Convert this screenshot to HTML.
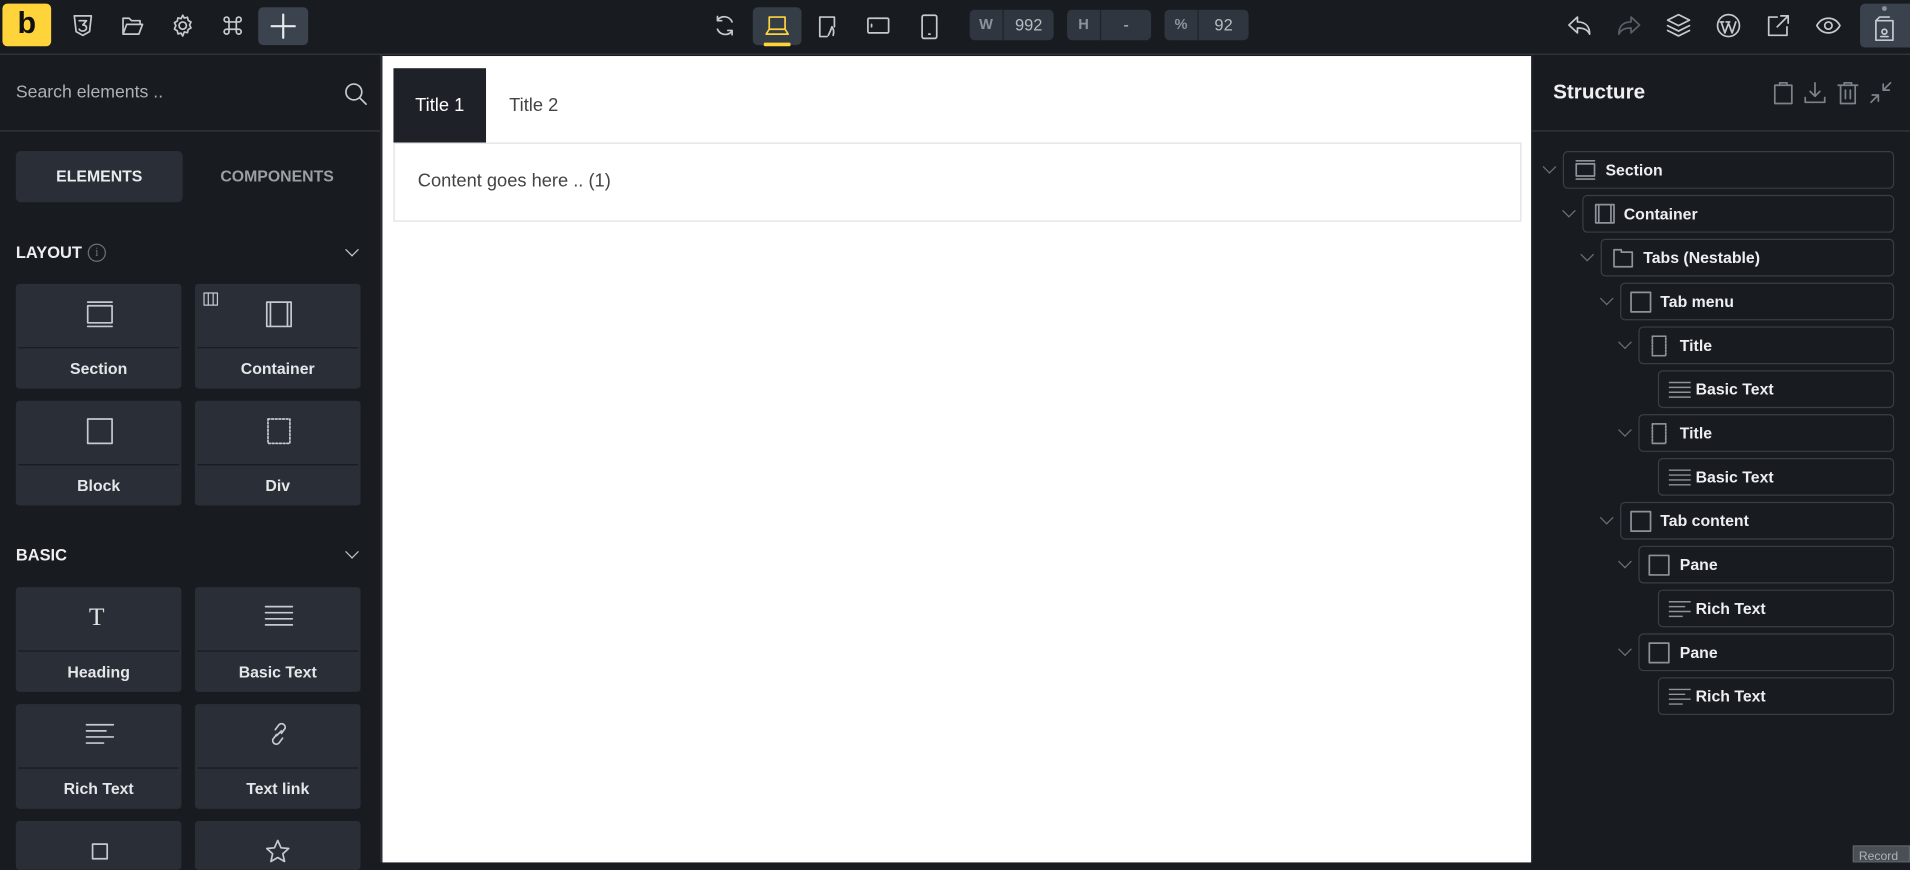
<!DOCTYPE html>
<html><head><meta charset="utf-8">
<style>
*{box-sizing:border-box;margin:0;padding:0}
html,body{width:1910px;height:862px;overflow:hidden;background:#181b1f}
#w{position:absolute;left:0;top:0;width:1568px;height:708px;transform:scale(1.21811);transform-origin:0 0;background:#181b1f;font-family:"Liberation Sans",Arial,sans-serif;color:#e6e8eb}
.a{position:absolute}
svg{position:absolute;fill:none;stroke:#c6c9ce;stroke-width:1.4;stroke-linecap:round;stroke-linejoin:round}
.card{position:absolute;width:136px;height:86px;background:#2a2f37;border-radius:3px}
.card .d{position:absolute;left:2px;right:2px;top:52px;border-top:1px solid #181b1f}
.card .l{position:absolute;left:0;right:0;top:62px;text-align:center;font-size:13px;font-weight:bold;color:#e4e6e9}
.row{position:absolute;height:31px;border:1px solid #3a3f47;border-radius:4px;right:13px}
.row .t{position:absolute;top:7px;font-size:13px;font-weight:bold;color:#eceef1}
.chev{position:absolute;width:8px;height:8px;border-right:1.2px solid #6b7078;border-bottom:1.2px solid #6b7078;transform:rotate(45deg)}
.box{position:absolute;height:25px;top:8px;background:#2f3640;border-radius:4px;font-size:13.5px}
.box .k{position:absolute;left:0;top:0;width:28px;height:25px;border-right:1px solid #1f242a;text-align:center;line-height:25px;font-weight:bold;color:#8d939b;font-size:12px}
.box .v{position:absolute;left:28px;right:0;top:0;line-height:25px;text-align:center;color:#b9bdc3}
</style></head><body><div id="w">
<div class="a" style="left:0;top:0;width:1568px;height:45px;background:#181b1f;border-bottom:1px solid #353a41"></div>
<div class="a" style="left:2px;top:3px;width:40px;height:35px;background:#ffd43b;border-radius:4px;color:#111;font-weight:bold;font-size:25px;text-align:center;line-height:33px">b</div>
<svg style="left:58px;top:11px" width="20" height="20" viewBox="0 0 20 20"><path d="M3 2h14l-1.5 13L10 18l-5.5-3z"/><path d="M7 6h6l-3 3.5c2 0 3 1 3 2.5s-1.5 2.5-3 2.5-2.5-.7-3-1.5"/></svg>
<svg style="left:99px;top:11px" width="20" height="20" viewBox="0 0 20 20"><path d="M2 17V4h5l2 2h7v3M2 17l3-8h13l-3 8z"/></svg>
<svg style="left:140px;top:11px" width="20" height="20" viewBox="0 0 20 20"><circle cx="10" cy="10" r="3"/><path d="M10 1.5l1.3 2.3 2.6-.6.6 2.6 2.3 1.3-1.2 2.4 1.2 2.4-2.3 1.3-.6 2.6-2.6-.6L10 18.5l-1.3-2.3-2.6.6-.6-2.6-2.3-1.3L4.4 10 3.2 7.6l2.3-1.3.6-2.6 2.6.6z"/></svg>
<svg style="left:181px;top:11px" width="20" height="20" viewBox="0 0 20 20"><path d="M7 7h6v6H7zM7 7V5a2 2 0 1 0-2 2zM13 7V5a2 2 0 1 1 2 2zM7 13v2a2 2 0 1 1-2-2zM13 13v2a2 2 0 1 0 2-2z"/></svg>
<div class="a" style="left:212px;top:6px;width:41px;height:31px;background:#3b434e;border-radius:4px"></div>
<svg style="left:221px;top:10px" width="23" height="23" viewBox="0 0 23 23"><path d="M11.5 2v19M2 11.5h19" stroke="#e8e9eb" stroke-width="1.8"/></svg>
<svg style="left:585px;top:11px" width="20" height="20" viewBox="0 0 20 20"><path d="M16 7a7 7 0 0 0-12-1.5M4 13a7 7 0 0 0 12 1.5M4 2.5v3.5h3.5M16 17.5V14h-3.5"/></svg>
<div class="a" style="left:618px;top:6px;width:40px;height:31px;background:#353d47;border-radius:4px"></div>
<div class="a" style="left:627px;top:35px;width:22px;height:3px;background:#ffd43b;border-radius:1px"></div>
<svg style="left:627px;top:12px" width="22" height="18" viewBox="0 0 22 18"><path d="M4.5 2h13v10h-13zM4.5 12L2 16h18l-2.5-4" stroke="#ffd43b"/></svg>
<svg style="left:670px;top:11px" width="20" height="22" viewBox="0 0 20 22"><path d="M9 19H3V3h12v8M10 18c1-2 2-4 3-7 1 2 2 3 1 7"/></svg>
<svg style="left:711px;top:13px" width="20" height="16" viewBox="0 0 20 16"><rect x="1.5" y="2" width="17" height="12" rx="1"/><path d="M4.5 7v2"/></svg>
<svg style="left:755px;top:11px" width="16" height="22" viewBox="0 0 16 22"><rect x="2" y="1.5" width="12" height="19" rx="1.5"/><path d="M7.5 17h1"/></svg>
<div class="box" style="left:796px;width:69px"><div class="k">W</div><div class="v">992</div></div>
<div class="box" style="left:876px;width:69px"><div class="k">H</div><div class="v">-</div></div>
<div class="box" style="left:956px;width:69px"><div class="k">%</div><div class="v">92</div></div>
<svg style="left:1286px;top:11px" width="22" height="20" viewBox="0 0 22 20"><path d="M9 3L2 9.5 9 16v-4c5 0 8 1 10 5 0-6-3-10-10-10z"/></svg>
<svg style="left:1326px;top:11px" width="22" height="20" viewBox="0 0 22 20"><path d="M13 3l7 6.5-7 6.5v-4c-5 0-8 1-10 5 0-6 3-10 10-10z" stroke="#5a6068"/></svg>
<svg style="left:1367px;top:10px" width="22" height="22" viewBox="0 0 22 22"><path d="M11 2l9 4.5-9 4.5-9-4.5zM2 11l9 4.5 9-4.5M2 15l9 4.5 9-4.5"/></svg>
<svg style="left:1408px;top:10px" width="22" height="22" viewBox="0 0 22 22"><circle cx="11" cy="11" r="9"/><path d="M5 8l3 9 3-8 3 8 3-9M4 8h3M9 8h3"/></svg>
<svg style="left:1449px;top:10px" width="22" height="22" viewBox="0 0 22 22"><path d="M10 4H3v15h15v-7M13 3h6v6M19 3l-9 9"/></svg>
<svg style="left:1490px;top:12px" width="22" height="18" viewBox="0 0 22 18"><path d="M1.5 9C4 4.5 7 3 11 3s7 1.5 9.5 6c-2.5 4.5-5.5 6-9.5 6S4 13.5 1.5 9z"/><circle cx="11" cy="9" r="3"/></svg>
<div class="a" style="left:1527px;top:3px;width:41px;height:36px;background:#3a424d;border-radius:4px 0 0 4px"></div>
<div class="a" style="left:1545px;top:5px;width:4px;height:4px;border-radius:2px;background:#8d939b"></div>
<svg style="left:1538px;top:13px" width="20" height="22" viewBox="0 0 20 22"><path d="M2 4h14v16H2zM2 4l3-3h8"/><circle cx="9" cy="13" r="2"/><path d="M6 17h6"/></svg>
<div class="a" style="left:312px;top:45px;width:2px;height:663px;background:#2a2e34"></div>
<div class="a" style="left:13px;top:68px;font-size:14.5px;color:#aeb2b8">Search elements ..</div>
<svg style="left:282px;top:67px" width="20" height="20" viewBox="0 0 20 20"><circle cx="8.5" cy="8.5" r="6.5"/><path d="M13.5 13.5l5 5"/></svg>
<div class="a" style="left:0;top:107px;width:312px;border-top:1px solid #353a41"></div>
<div class="a" style="left:13px;top:124px;width:137px;height:42px;background:#2a2f37;border-radius:4px;text-align:center;line-height:42px;font-size:13px;font-weight:bold;color:#e9ebee">ELEMENTS</div>
<div class="a" style="left:155px;top:124px;width:145px;height:42px;text-align:center;line-height:42px;font-size:13px;font-weight:bold;color:#9ba0a7">COMPONENTS</div>
<div class="a" style="left:13px;top:200px;font-size:13.5px;font-weight:bold;color:#eceef1">LAYOUT</div>
<div class="a" style="left:72px;top:200px;width:15px;height:15px;border:1px solid #6b7078;border-radius:50%;font-size:10px;color:#6b7078;text-align:center;line-height:13px;font-family:'Liberation Serif',serif">i</div>
<div class="chev" style="left:285px;top:201px;border-color:#c6c9ce"></div>
<div class="card" style="left:13px;top:233px"><div class="d"></div><div class="l">Section</div></div>
<svg style="left:70px;top:246px" width="24" height="24" viewBox="0 0 24 24"><path d="M2 2h20M2 22h20M2 5h20v14H2z"/></svg>
<div class="card" style="left:160px;top:233px"><div class="d"></div><div class="l">Container</div></div>
<svg style="left:166px;top:239px" width="14" height="14" viewBox="0 0 14 14"><path d="M1.5 1.5h11v10h-11zM5 1.5v10M9 1.5v10" stroke-width="1"/></svg>
<svg style="left:217px;top:246px" width="24" height="24" viewBox="0 0 24 24"><path d="M2 2h20v20H2zM5 2v20M19 2v20"/></svg>
<div class="card" style="left:13px;top:329px"><div class="d"></div><div class="l">Block</div></div>
<svg style="left:70px;top:342px" width="24" height="24" viewBox="0 0 24 24"><path d="M2 2h20v20H2z"/></svg>
<div class="card" style="left:160px;top:329px"><div class="d"></div><div class="l">Div</div></div>
<svg style="left:217px;top:342px" width="24" height="24" viewBox="0 0 24 24"><path d="M3 2h18v20H3z" stroke-dasharray="1.5 1.5"/></svg>
<div class="a" style="left:13px;top:448px;font-size:13.5px;font-weight:bold;color:#eceef1">BASIC</div>
<div class="chev" style="left:285px;top:449px;border-color:#c6c9ce"></div>
<div class="card" style="left:13px;top:482px"><div class="d"></div><div class="l">Heading</div></div>
<div class="a" style="left:73px;top:494px;font-size:21px;font-family:'Liberation Serif',serif;color:#e0e2e5">T</div>
<div class="card" style="left:160px;top:482px"><div class="d"></div><div class="l">Basic Text</div></div>
<svg style="left:217px;top:495px" width="24" height="24" viewBox="0 0 24 24"><path d="M1 3h22M1 8h22M1 13h22M1 18h22"/></svg>
<div class="card" style="left:13px;top:578px"><div class="d"></div><div class="l">Rich Text</div></div>
<svg style="left:70px;top:591px" width="24" height="24" viewBox="0 0 24 24"><path d="M1 4h22M1 9h16M1 14h22M1 19h14"/></svg>
<div class="card" style="left:160px;top:578px"><div class="d"></div><div class="l">Text link</div></div>
<svg style="left:217px;top:591px" width="24" height="24" viewBox="0 0 24 24"><path d="M10 13l4-4M9 8l3-4a3 3 0 0 1 5 3l-3 4M15 15l-3 4a3 3 0 0 1-5-3l3-4"/></svg>
<div class="card" style="left:13px;top:674px;height:40px"></div>
<svg style="left:74px;top:691px" width="16" height="16" viewBox="0 0 16 16"><path d="M2 2h12v12H2z"/></svg>
<div class="card" style="left:160px;top:674px;height:40px"></div>
<svg style="left:217px;top:688px" width="22" height="22" viewBox="0 0 22 22"><path d="M11 2l2.7 6 6.3.6-4.8 4.3 1.4 6.3L11 16l-5.6 3.2 1.4-6.3L2 8.6 8.3 8z"/></svg>
<div class="a" style="left:314px;top:46px;width:943px;height:662px;background:#fff"></div>
<div class="a" style="left:323px;top:56px;width:76px;height:61px;background:#1e2127;color:#fff;font-size:15px;text-align:center;line-height:61px">Title 1</div>
<div class="a" style="left:418px;top:56px;height:61px;color:#444;font-size:15px;line-height:61px">Title 2</div>
<div class="a" style="left:323px;top:117px;width:926px;height:65px;border:1px solid #e0e0e0"></div>
<div class="a" style="left:343px;top:140px;color:#444;font-size:15px">Content goes here .. (1)</div>
<div class="a" style="left:1257px;top:45px;width:1px;height:663px;background:#2a2e34"></div>
<div class="a" style="left:1275px;top:66px;font-size:17px;font-weight:bold;color:#eef0f2">Structure</div>
<svg style="left:1455px;top:66px" width="18" height="20" viewBox="0 0 18 20"><path d="M2 4h14v15H2zM6 4V2h6v2" stroke="#7d838b"/></svg>
<svg style="left:1480px;top:66px" width="20" height="20" viewBox="0 0 20 20"><path d="M10 2v11M6 9l4 4 4-4M2 14v4h16v-4" stroke="#7d838b"/></svg>
<svg style="left:1508px;top:66px" width="18" height="20" viewBox="0 0 18 20"><path d="M1 4h16M6 4V2h6v2M3 4v15h12V4M7 8v7M11 8v7" stroke="#7d838b"/></svg>
<svg style="left:1534px;top:66px" width="20" height="20" viewBox="0 0 20 20"><path d="M2 18l6-6M3 12h5v5M18 2l-6 6M12 3v5h5" stroke="#7d838b"/></svg>
<div class="a" style="left:1258px;top:107px;width:310px;border-top:1px solid #353a41"></div>
<div class="chev" style="left:1268px;top:133px"></div>
<div class="row" style="left:1283px;top:124px;width:272px"><svg style="left:9px;top:6px" width="17" height="17" viewBox="0 0 17 17"><path d="M1 1h15M1 16h15M1 3.5h15v10H1z" stroke="#8d939b"/></svg><div class="t" style="left:34px">Section</div></div>
<div class="chev" style="left:1284px;top:169px"></div>
<div class="row" style="left:1299px;top:160px;width:256px"><svg style="left:9px;top:6px" width="17" height="17" viewBox="0 0 17 17"><path d="M1 1h15v15H1zM3.5 1v15M13.5 1v15" stroke="#8d939b"/></svg><div class="t" style="left:33px">Container</div></div>
<div class="chev" style="left:1299px;top:205px"></div>
<div class="row" style="left:1314px;top:196px;width:241px"><svg style="left:9px;top:6px" width="17" height="17" viewBox="0 0 17 17"><path d="M1 2h6v2h9v12H1z" stroke="#8d939b"/></svg><div class="t" style="left:34px">Tabs (Nestable)</div></div>
<div class="chev" style="left:1315px;top:241px"></div>
<div class="row" style="left:1330px;top:232px;width:225px"><svg style="left:7px;top:6px" width="18" height="18" viewBox="0 0 18 18"><path d="M1 1h16v16H1z" stroke="#8d939b"/></svg><div class="t" style="left:32px">Tab menu</div></div>
<div class="chev" style="left:1330px;top:277px"></div>
<div class="row" style="left:1345px;top:268px;width:210px"><svg style="left:9px;top:6px" width="14" height="18" viewBox="0 0 14 18"><path d="M1.5 1h11v16h-11z" stroke="#8d939b" stroke-dasharray="1.5 1"/></svg><div class="t" style="left:33px">Title</div></div>
<div class="row" style="left:1361px;top:304px;width:194px"><svg style="left:8px;top:8px" width="18" height="14" viewBox="0 0 18 14"><path d="M0 1h18M0 5h18M0 9h18M0 13h18" stroke="#8d939b" stroke-width="1.2"/></svg><div class="t" style="left:30px">Basic Text</div></div>
<div class="chev" style="left:1330px;top:349px"></div>
<div class="row" style="left:1345px;top:340px;width:210px"><svg style="left:9px;top:6px" width="14" height="18" viewBox="0 0 14 18"><path d="M1.5 1h11v16h-11z" stroke="#8d939b" stroke-dasharray="1.5 1"/></svg><div class="t" style="left:33px">Title</div></div>
<div class="row" style="left:1361px;top:376px;width:194px"><svg style="left:8px;top:8px" width="18" height="14" viewBox="0 0 18 14"><path d="M0 1h18M0 5h18M0 9h18M0 13h18" stroke="#8d939b" stroke-width="1.2"/></svg><div class="t" style="left:30px">Basic Text</div></div>
<div class="chev" style="left:1315px;top:421px"></div>
<div class="row" style="left:1330px;top:412px;width:225px"><svg style="left:7px;top:6px" width="18" height="18" viewBox="0 0 18 18"><path d="M1 1h16v16H1z" stroke="#8d939b"/></svg><div class="t" style="left:32px">Tab content</div></div>
<div class="chev" style="left:1330px;top:457px"></div>
<div class="row" style="left:1345px;top:448px;width:210px"><svg style="left:7px;top:6px" width="18" height="18" viewBox="0 0 18 18"><path d="M1 1h16v16H1z" stroke="#8d939b"/></svg><div class="t" style="left:33px">Pane</div></div>
<div class="row" style="left:1361px;top:484px;width:194px"><svg style="left:8px;top:8px" width="18" height="14" viewBox="0 0 18 14"><path d="M0 1h18M0 5h13M0 9h18M0 13h11" stroke="#8d939b" stroke-width="1.2"/></svg><div class="t" style="left:30px">Rich Text</div></div>
<div class="chev" style="left:1330px;top:529px"></div>
<div class="row" style="left:1345px;top:520px;width:210px"><svg style="left:7px;top:6px" width="18" height="18" viewBox="0 0 18 18"><path d="M1 1h16v16H1z" stroke="#8d939b"/></svg><div class="t" style="left:33px">Pane</div></div>
<div class="row" style="left:1361px;top:556px;width:194px"><svg style="left:8px;top:8px" width="18" height="14" viewBox="0 0 18 14"><path d="M0 1h18M0 5h13M0 9h18M0 13h11" stroke="#8d939b" stroke-width="1.2"/></svg><div class="t" style="left:30px">Rich Text</div></div>
<div class="a" style="left:1521px;top:694px;width:47px;height:14px;background:#4a4f56;border:1px solid #5d636b;font-size:10px;color:#aeb2b7;padding:3px 0 0 4px;overflow:hidden">Record</div>
</div></body></html>
